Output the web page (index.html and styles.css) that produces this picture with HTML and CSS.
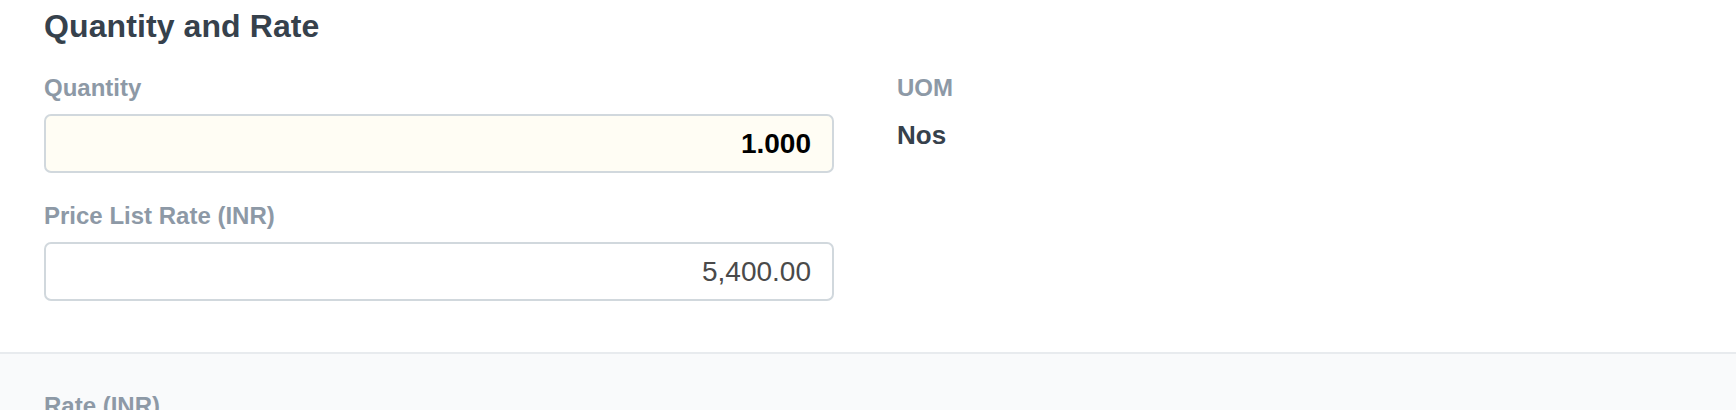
FILE: index.html
```html
<!DOCTYPE html>
<html>
<head>
<meta charset="utf-8">
<link rel="stylesheet" href="styles.css">
</head>
<body>
<div class="page">
  <section class="section">
    <h2 class="section-title">Quantity and Rate</h2>
    <div class="columns">
      <div class="column">
        <div class="field">
          <label class="field-label">Quantity</label>
          <div class="input input-bold">1.000</div>
        </div>
        <div class="field">
          <label class="field-label">Price List Rate (INR)</label>
          <div class="input">5,400.00</div>
        </div>
      </div>
      <div class="column">
        <div class="field">
          <label class="field-label">UOM</label>
          <div class="static-value">Nos</div>
        </div>
      </div>
    </div>
  </section>
  <section class="section section-alt">
    <div class="columns">
      <div class="column">
        <div class="field">
          <label class="field-label">Rate (INR)</label>
        </div>
      </div>
    </div>
  </section>
</div>
</body>
</html>
```

FILE: styles.css
```css
* { box-sizing: border-box; }
html, body {
  margin: 0;
  padding: 0;
  background: #ffffff;
  font-family: "Liberation Sans", Arial, sans-serif;
}
.page {
  width: 1736px;
  height: 410px;
  overflow: hidden;
}
.section {
  padding: 7px 49px 51px 44px;
}
.section-title {
  margin: 0;
  font-size: 32px;
  line-height: 38px;
  font-weight: 700;
  color: #36414c;
  letter-spacing: 0.1px;
}
.columns {
  display: grid;
  grid-template-columns: 790px 1fr;
  column-gap: 63px;
  margin-top: 28px;
}
.section-alt .columns { margin-top: 0; }
.field + .field { margin-top: 28px; }
.field-label {
  display: block;
  font-size: 24px;
  line-height: 30px;
  font-weight: 700;
  color: #8d99a6;
  margin-bottom: 11px;
}
.input {
  height: 59px;
  border: 2px solid #d1d8dd;
  border-radius: 7px;
  background: #ffffff;
  padding: 0 21px;
  display: flex;
  align-items: center;
  justify-content: flex-end;
  font-size: 28px;
  color: #4a4a4a;
}
.input-bold {
  background: #fffdf4;
  font-weight: 700;
  color: #000000;
}
.static-value {
  font-size: 26px;
  line-height: 30px;
  font-weight: 700;
  color: #36414c;
  margin-top: 17px;
}
.section-alt {
  border-top: 2px solid #e8ebee;
  background: #f9fafb;
  padding-top: 37px;
  height: 100px;
}
```
